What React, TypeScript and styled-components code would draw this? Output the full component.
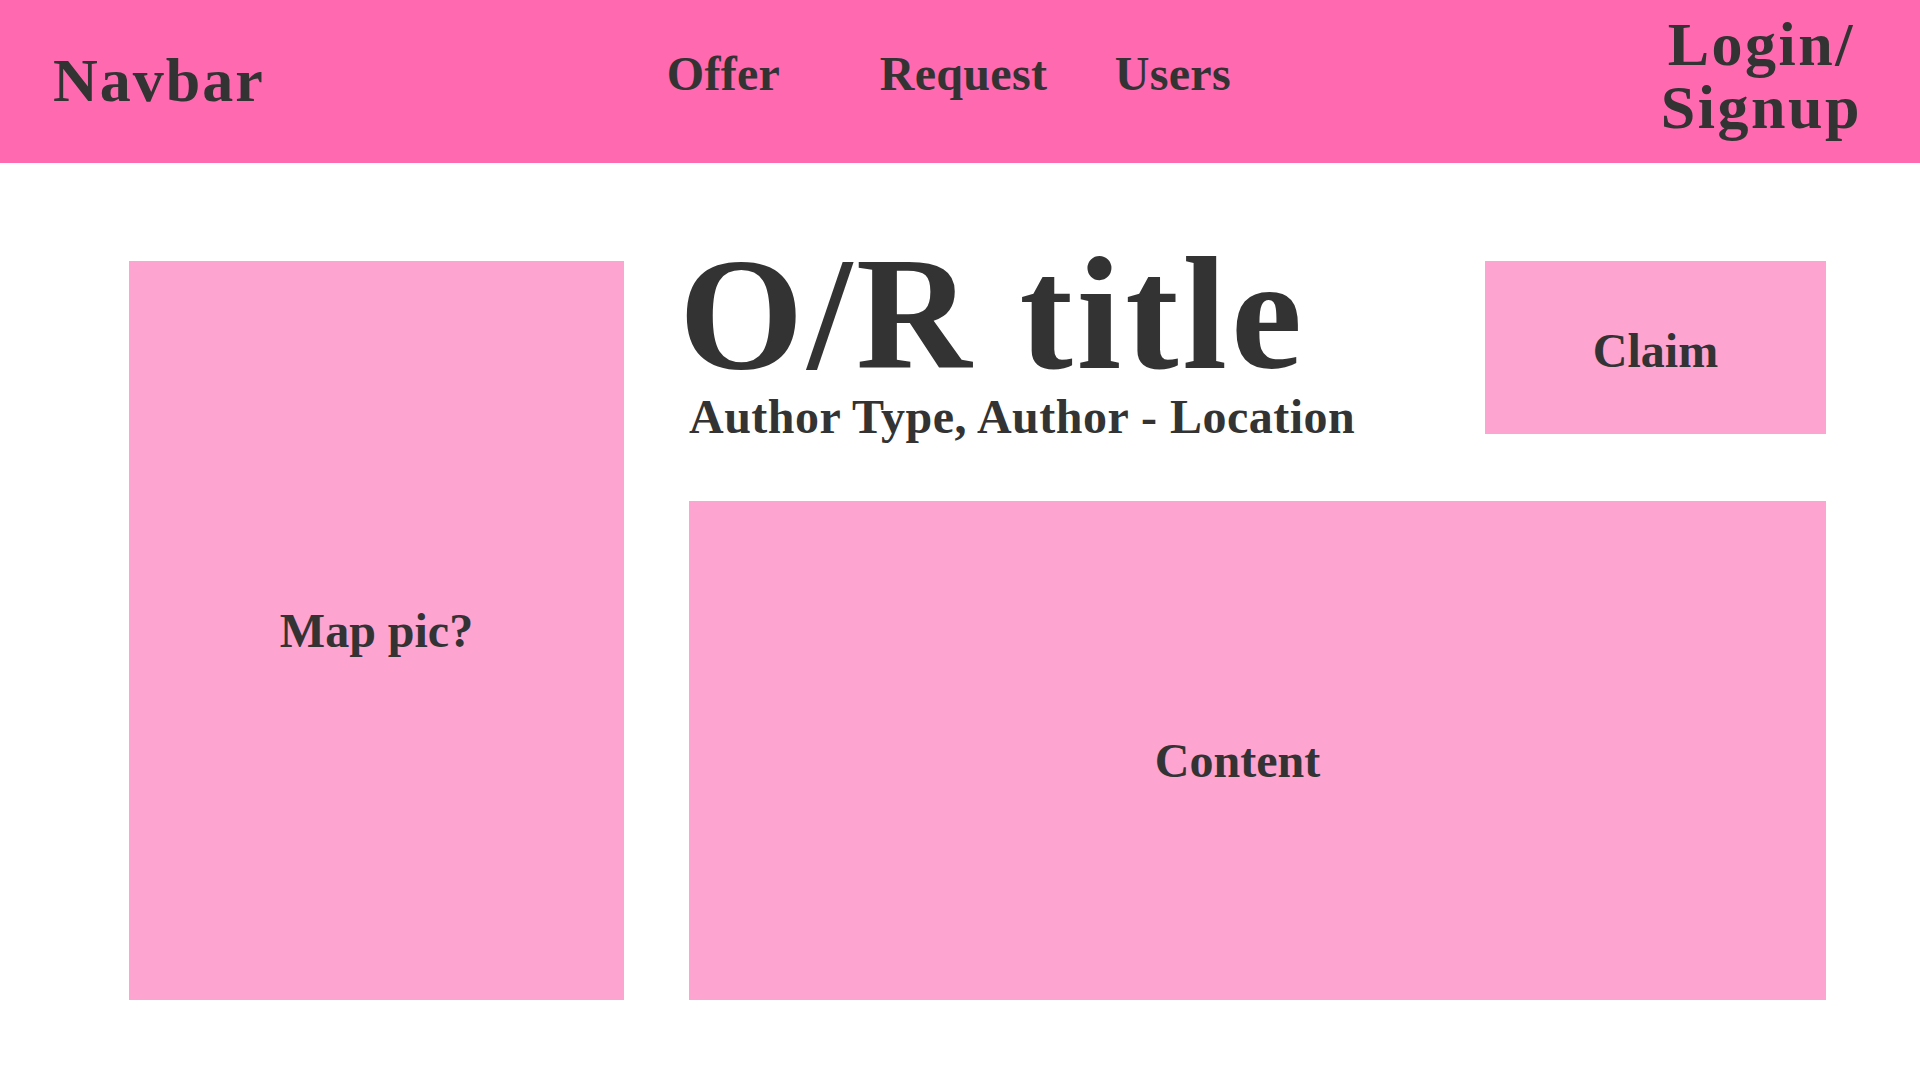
import React from "react";
import styled, { createGlobalStyle } from "styled-components";

const GlobalStyle = createGlobalStyle`
  html, body {
    margin: 0;
    padding: 0;
    background: #ffffff;
  }
  body {
    font-family: "Liberation Serif", "Times New Roman", serif;
    color: #333333;
  }
  * { box-sizing: border-box; }
`;

const Page = styled.div`
  width: 1920px;
  min-height: 1080px;
  background: #ffffff;
`;

const Navbar = styled.header`
  height: 163px;
  background: #ff69b0;
  display: flex;
  align-items: flex-start;
  padding: 0 58px 0 53px;
  font-weight: 700;
  color: #333333;
`;

const Brand = styled.div`
  font-size: 62px;
  line-height: 1;
  letter-spacing: 2px;
  margin-top: 49px;
`;

const Links = styled.nav`
  display: grid;
  grid-template-columns: 213px 235px auto;
  margin-left: 402px;
  margin-top: 50px;
`;

const NavLink = styled.a`
  font-size: 48px;
  line-height: 1;
  letter-spacing: 0.3px;
  color: #333333;
  text-decoration: none;
`;

const Login = styled.div`
  margin-left: auto;
  margin-top: 13px;
  font-size: 62px;
  line-height: 63px;
  letter-spacing: 2.5px;
  text-align: center;
`;

const Main = styled.main`
  display: grid;
  grid-template-columns: 495px 1fr;
  column-gap: 65px;
  padding: 98px 94px 0 129px;
`;

const Panel = styled.div`
  background: #fda4d0;
  display: flex;
  align-items: center;
  justify-content: center;
  font-size: 48px;
  font-weight: 700;
  color: #333333;
`;

const MapPanel = styled(Panel)`
  height: 739px;
`;

const RightColumn = styled.section`
  display: flex;
  flex-direction: column;
  height: 739px;
`;

const HeaderRow = styled.div`
  display: flex;
  justify-content: space-between;
  align-items: flex-start;
`;

const Heading = styled.div`
  margin-top: -19px;
  margin-bottom: -30px;
`;

const Title = styled.h1`
  margin: 0 0 0 -10px;
  font-size: 160px;
  line-height: 144px;
  font-weight: 700;
  letter-spacing: 4px;
  color: #333333;
`;

const Subtitle = styled.h2`
  margin: 7px 0 0 0;
  font-size: 48px;
  line-height: 1;
  font-weight: 700;
  letter-spacing: 0.5px;
  color: #333333;
`;

const ClaimPanel = styled(Panel)`
  width: 341px;
  height: 173px;
  flex-shrink: 0;
  padding-top: 6px;
`;

const ContentPanel = styled(Panel)`
  margin-top: 67px;
  flex: 1;
  padding: 20px 40px 0 0;
`;

export default function App() {
  return (
    <Page>
      <GlobalStyle />
      <Navbar>
        <Brand>Navbar</Brand>
        <Links>
          <NavLink href="#">Offer</NavLink>
          <NavLink href="#">Request</NavLink>
          <NavLink href="#">Users</NavLink>
        </Links>
        <Login>
          Login/
          <br />
          Signup
        </Login>
      </Navbar>
      <Main>
        <MapPanel>Map pic?</MapPanel>
        <RightColumn>
          <HeaderRow>
            <Heading>
              <Title>O/R title</Title>
              <Subtitle>Author Type, Author - Location</Subtitle>
            </Heading>
            <ClaimPanel>Claim</ClaimPanel>
          </HeaderRow>
          <ContentPanel>Content</ContentPanel>
        </RightColumn>
      </Main>
    </Page>
  );
}
